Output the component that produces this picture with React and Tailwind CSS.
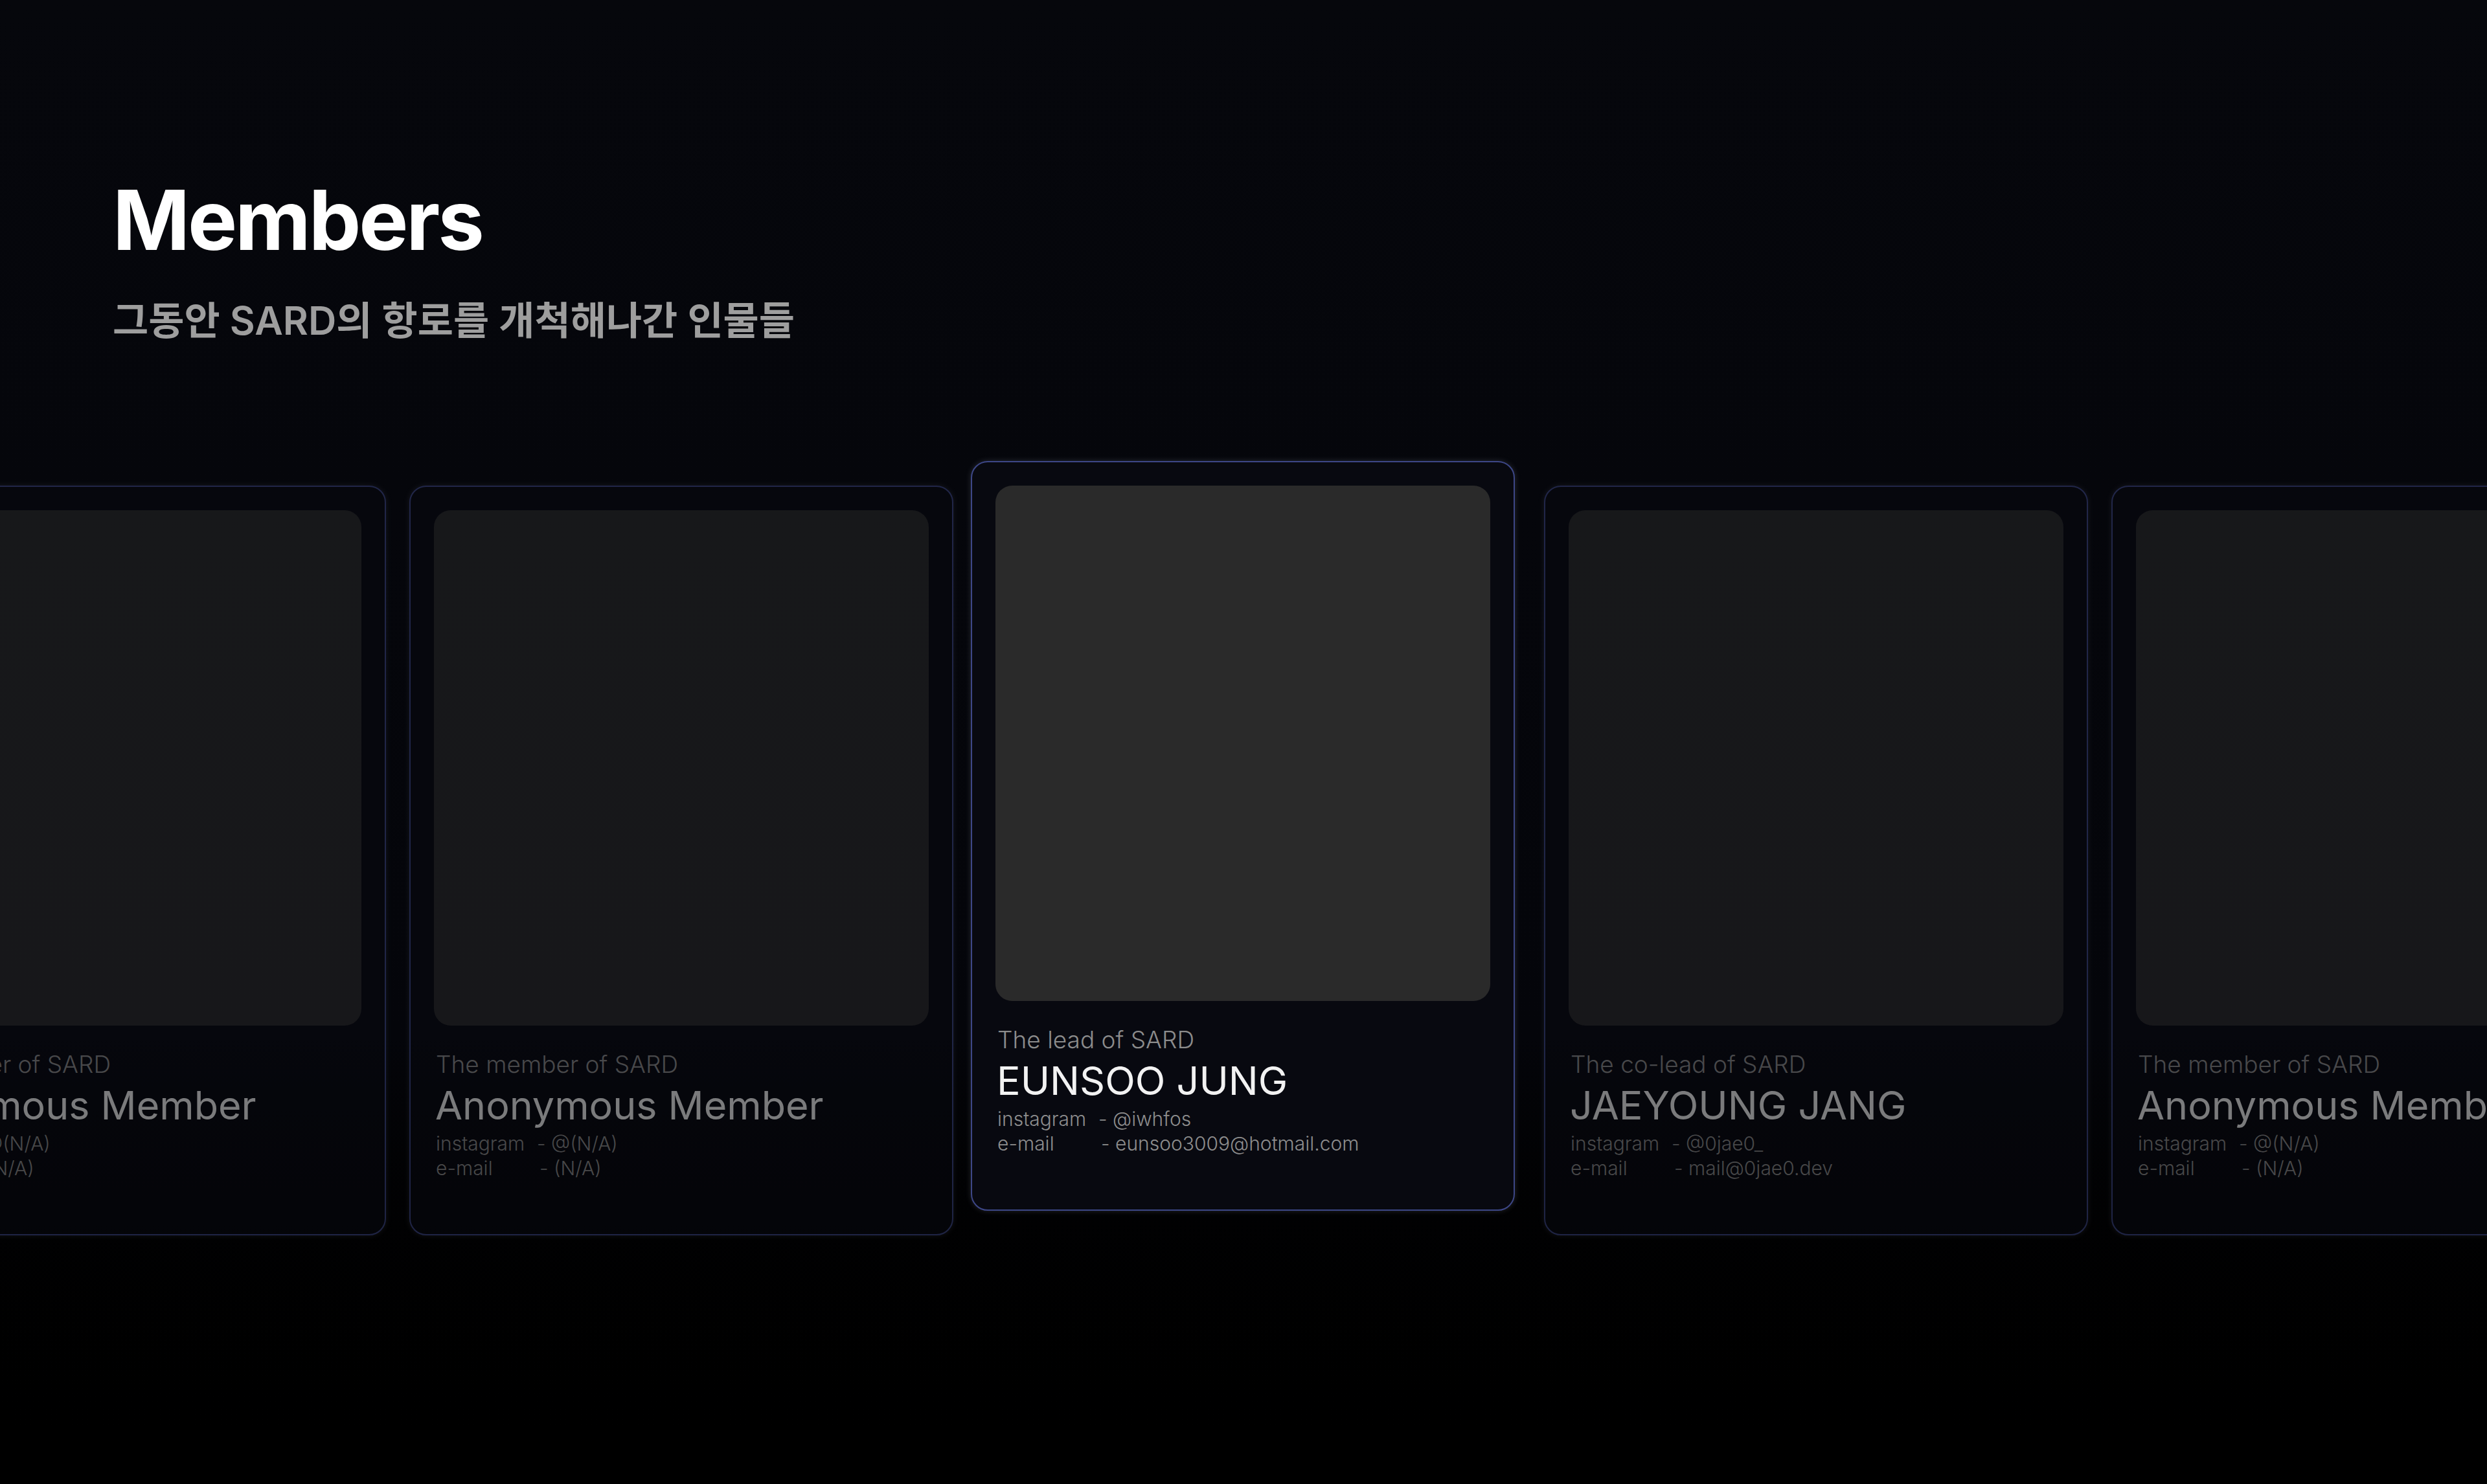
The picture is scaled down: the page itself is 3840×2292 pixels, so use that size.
import React from "react";

const members = [
  { role: "The member of SARD", name: "Anonymous Member", insta: "@(N/A)", mail: "(N/A)" },
  { role: "The member of SARD", name: "Anonymous Member", insta: "@(N/A)", mail: "(N/A)" },
  { role: "The lead of SARD", name: "EUNSOO JUNG", insta: "@iwhfos", mail: "eunsoo3009@hotmail.com", active: true },
  { role: "The co-lead of SARD", name: "JAEYOUNG JANG", insta: "@0jae0_", mail: "mail@0jae0.dev" },
  { role: "The member of SARD", name: "Anonymous Member", insta: "@(N/A)", mail: "(N/A)" },
];

function Card({ m }) {
  return (
    <div
      className={
        "shrink-0 w-[840px] h-[1158px] rounded-[26px] border-2 border-[#3d4787] bg-[#080910] shadow-[0_0_10px_rgba(200,205,230,0.18)] p-[36px] flex flex-col " +
        (m.active ? "ml-[-9px] mr-[9px]" : "mt-[38px] opacity-50")
      }
    >
      <div className="w-full h-[796px] rounded-[26px] bg-[#2a2a2a]" />
      <div className="mt-[36px] px-[3px] text-[37px] leading-[48px] font-light text-[#8c8c8c]">{m.role}</div>
      <div className="mt-[3px] px-[2px] text-[61px] leading-[72px] font-normal text-[#f2f2f2]">{m.name}</div>
      <div className="mt-[4px] px-[3px] text-[30px] leading-[38px] font-light text-[#8e8e8e]">
        <div className="flex">
          <span className="w-[156px]">instagram</span>
          <span>- {m.insta}</span>
        </div>
        <div className="flex">
          <span className="w-[160px]">e-mail</span>
          <span>- {m.mail}</span>
        </div>
      </div>
    </div>
  );
}

export default function App() {
  return (
    <div className="w-full min-h-[2292px] overflow-hidden bg-linear-to-b from-[#06070c] via-[#04050a] via-70% to-black font-[Inter,'Noto_Sans_CJK_KR',sans-serif]">
      <div className="pl-[174px] pt-[276px]">
        <h1 className="text-[128px] leading-none font-bold tracking-[-0.025em] text-white">Members</h1>
        <p className="mt-[56px] text-[60px] leading-[70px] font-semibold tracking-normal text-[#9e9e9e]">
          그동안 SARD의 항로를 개척해나간 인물들
        </p>
      </div>
      <div className="mt-[182px] ml-[-244px] flex items-start gap-[36px]">
        {members.map((m, i) => (
          <Card key={i} m={m} />
        ))}
      </div>
    </div>
  );
}
